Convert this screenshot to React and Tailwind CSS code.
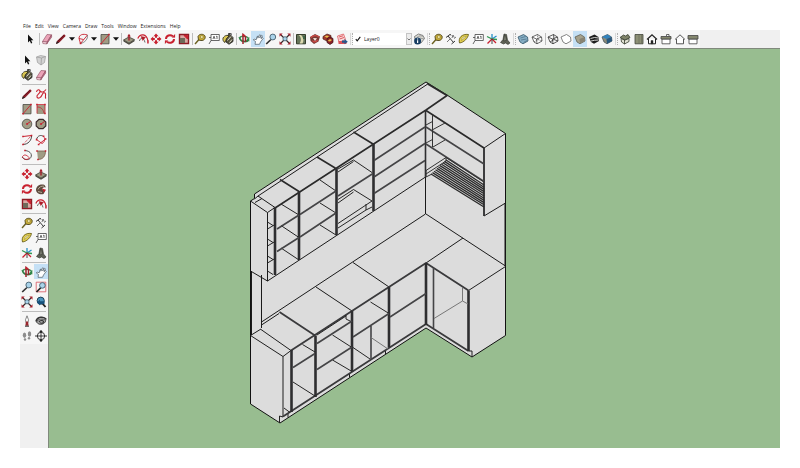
import React from "react";

const RED = "#c8202f";
const TAN = "#a09c85";

/* Every glyph is drawn on a 12 x 12 grid. */
const glyphs = {
  select: <path d="M4 1.500v8l1.800-1.700L7 10.600l1.300-.6L7.100 7.300h2.300z" fill="#111" />,
  eraser: (
    <g stroke="#8a4a5c" strokeWidth=".6">
      <path d="M1.500 8.500 6 1.500l4.500.3L6.300 9z" fill="#eba3b8" />
      <path d="m1.500 8.500 4.800.5-.6 2-3.800-.5z" fill="#f7d3dc" />
      <path d="m6.300 9 4.200-7.200.2 2.200L5.700 11z" fill="#c9708b" />
    </g>
  ),
  pencil: (
    <g>
      <path d="m1 11 1-3 6.500-6.300c1-.9 2.600.5 1.700 1.700L4 9.800z" fill="#8c1d28" />
      <path d="m3 8 6-5.700" stroke="#5a1018" strokeWidth=".8" />
      <path d="m1 11 .9-2.700L4 9.800z" fill="#222" />
    </g>
  ),
  arc: (
    <g fill="none" stroke={RED} strokeWidth=".9">
      <path d="M2 5.500C2 1.500 6 .5 10.500 2L3.500 10.500zM2 5.500 6.500 6.500" />
      <path d="M10.500 2C11 6 8 9.500 3.500 10.500" stroke="#777" />
      <path d="M2.700 9.500h1.700v1.700H2.700z" fill={RED} stroke="none" />
    </g>
  ),
  rect: (
    <g>
      <path d="M2 1.500h8v9.300H2z" fill={TAN} stroke="#4a4a42" strokeWidth=".8" />
      <path d="m2 10.800 8-9.300" stroke={RED} strokeWidth=".9" />
      <path d="M1.300 10h1.500v1.500H1.300zM9.200.7h1.500v1.500H9.200z" fill={RED} />
    </g>
  ),
  rotRect: (
    <g>
      <path d="M2 2h8v9H2z" fill={TAN} />
      <path d="M2 10.500V1.500h8v9M2 4c4 0 6 2 7 6" fill="none" stroke={RED} strokeWidth=".8" />
      <path d="M1.200.8h1.500v1.500H1.200zM9.200.8h1.500v1.500H9.200zM9.200 9.700h1.500v1.500H9.200z" fill={RED} />
    </g>
  ),
  circle: (
    <g>
      <circle cx="6" cy="6" r="4.800" fill={TAN} stroke="#4a4a42" strokeWidth=".8" />
      <path d="m6 6 3.500-2.500" stroke={RED} />
      <circle cx="6" cy="6" r=".9" fill={RED} />
    </g>
  ),
  polygon: (
    <g>
      <path d="m4 1.300 4 0 2.800 2.700v4L8 10.700H4L1.200 8V4z" fill={TAN} stroke="#3a2c2c" strokeWidth="1.200" />
      <path d="m6 6 3.500-2.500" stroke={RED} />
      <circle cx="6" cy="6" r="1" fill={RED} />
    </g>
  ),
  freehand: (
    <path
      d="M1.500 4C2 1 5 1 5 3.500S1 6.500 2 9s4 .5 5-2 3-3 3.500-1-1 3.500.5 4.500M5 3c2 2 4 1 6-1.500"
      fill="none"
      stroke={RED}
      strokeWidth="1.100"
    />
  ),
  arc2: (
    <g fill="none">
      <path d="M2 2.500 10.500 1.500" stroke={RED} />
      <path d="M10.500 1.500C11 6 7 10.500 2 10.500" stroke="#444" />
      <path d="m10.500 1.500-8.500 9" stroke={RED} strokeDasharray="1 1" />
      <path d="M1.200 1.700h1.500v1.500H1.200zM9.800.8h1.500v1.500H9.800zM1.200 9.700h1.500v1.500H1.200z" fill={RED} />
    </g>
  ),
  arc3: (
    <g fill="none">
      <path d="M1.500 5.500C2.500 1.500 6 .5 8.500 2.500" stroke="#444" />
      <path d="M8.500 2.500C10.500 4.500 10 8 7 9.500L1.500 5.500M10.500 5 3.500 10.500" stroke={RED} strokeWidth=".9" />
      <path d="M.8 4.800h1.600v1.600H.8zM2.800 9.700h1.600v1.600H2.800zM9.800 4.200h1.600v1.600H9.800zM7.800 1.500h1.600v1.600H7.800z" fill={RED} />
    </g>
  ),
  arc4: (
    <g fill="none">
      <path d="M4 1.500c6 .5 8 5 5 8-2 1.800-6 1.500-8-1.500" stroke="#555" />
      <path d="M1.500 7.500C4 4.500 6 6.500 8.500 9M1.500 7.500c1 3 4 4 7 1.500" stroke={RED} strokeWidth=".9" />
      <path d="M3.200.8h1.600v1.500H3.200z" fill={RED} />
    </g>
  ),
  pie: (
    <g>
      <path d="M2 2h8.500C10.500 7 8 10.500 3 10.500z" fill={TAN} />
      <path d="M2 2h8.500C10.500 7 8 10.500 3 10.500" fill="none" stroke="#7d5a4c" strokeWidth=".8" />
      <path d="M1.200 1.200h1.500v1.500H1.200zM9.800 1.200h1.500v1.500H9.800zM2.200 9.700h1.500v1.500H2.200z" fill={RED} />
    </g>
  ),
  push: (
    <g>
      <path d="m.5 7 5.300-3 5.700 2.700-5.500 3.500z" fill="#9b9780" stroke="#3b3a30" strokeWidth=".8" />
      <path d="M.5 7v1.500L6 11.700l5.500-3.400V6.700L6 10.200z" fill="#4c4a40" />
      <path d="M6 .8 7.800 3.500H6.700v4H5.300v-4H4.200z" fill="#a51d29" />
    </g>
  ),
  follow: (
    <g>
      <path d="M1 6.500C1.500 2.500 6 .5 9.500 2L11 4.500C8.500 3.500 7 5 7.500 6.500l3 1-2 3.500C4.500 12 1 10 1 6.500z" fill="#5e4a3e" />
      <path d="M3 6.500C4 4 6.500 2.800 9 3.200M3 8.500l4 1" stroke="#b5aa95" fill="none" />
      <path d="m7 5.500 4 1.200L8.800 9.500z" fill={RED} />
    </g>
  ),
  offset: (
    <g fill="none" stroke={RED}>
      <path d="M.8 5.500C3 .5 9.500 0 11 8" strokeWidth="1.200" />
      <path d="M2.500 8C3 4.500 7 4 8 9.500" stroke="#666" />
      <path d="m4 3.500 4.500.8-2.800 3.200z" fill="#a51d29" strokeWidth=".5" />
      <path d="M10.200 7.500h1.500v3h-1.500z" fill={RED} stroke="none" />
    </g>
  ),
  move: (
    <path
      d="M6 .5 8.500 3.200H7v1.600H5V3.200H3.500zM6 11.500 3.500 8.800H5V7.200h2v1.600h1.500zM.5 6 3.200 3.500V5h1.600v2H3.200v1.500zM11.500 6 8.800 8.500V7H7.200V5h1.600V3.500z"
      fill={RED}
    />
  ),
  rotate: (
    <g fill="none" stroke={RED} strokeWidth="2">
      <path d="M2 6c0-3.500 4-5 7-2.700M10 6c0 3.500-4 5-7 2.700" />
      <path d="M8 4.500h3V1.200zM4 7.500H1v3.300z" fill={RED} strokeWidth=".2" />
    </g>
  ),
  scale: (
    <g>
      <path d="M1.500 1.500h9v9h-9z" fill="#d9a8a3" stroke="#8f1b25" strokeWidth="1.400" />
      <path d="M2 5h5v5H2z" fill="#6e6a5a" />
      <path d="M6 2.500h3.500V6z" fill={RED} stroke={RED} />
    </g>
  ),
  tape: (
    <g>
      <path d="M4 3.500C5 .8 9.500.5 11 3c.8 2.500-1 4.800-4 4.500L4.500 7z" fill="#c9ad38" stroke="#4b4218" strokeWidth=".9" />
      <circle cx="7.800" cy="4" r="1.500" fill="#eee3a2" stroke="#766922" strokeWidth=".5" />
      <path d="M5 6.500 1 11" stroke="#6b601f" strokeWidth="1.400" />
    </g>
  ),
  dimension: (
    <g fill="none" stroke="#222" strokeWidth=".9">
      <path d="m1 4.500 4-3M6.500 11 10 8M3 3l5.500 6.500M5 1l1 1.500" />
      <path d="m7 5 1-3 1.200 2.500M9 5.500 11 4M2 9l3-3" stroke="#666" />
    </g>
  ),
  protractor: (
    <g>
      <path d="M1.500 10C0 5 4 .5 10.500 1.500z" fill="#e3cf50" />
      <path d="M1.500 10C0 5 4 .5 10.500 1.500 10 5 6 9.500 1.500 10z" fill="#e3cf50" stroke="#5d5418" strokeWidth=".8" />
      <path d="M3.500 7.500C3.500 5 5.500 3.300 8.500 3.200z" fill="#f6f3dc" stroke="#8d7f25" strokeWidth=".5" />
    </g>
  ),
  text: (
    <g fill="none" stroke="#444" strokeWidth=".8">
      <path d="M3 1.500h8.300v6H3z" fill="#fff" />
      <path d="M3 7.500 1 11M5 6l1-2.800L7 6M8.200 3.500 9 3v3M1 4.500h2" />
    </g>
  ),
  paint: (
    <g>
      <path d="M4 3.500 7.500 1 11 4.500v4L7 11.300 4 9z" fill="#57543f" stroke="#222" strokeWidth=".8" />
      <path d="M1 5c2-3 4-3 6-2L4.500 5.500 3 9.500C1.500 9 .5 7 1 5z" fill="#d9c552" stroke="#2c2a14" strokeWidth=".8" />
      <path d="m5.500 7.500 3.500-4M7.500 9.500 10 6.500" stroke="#e4e2d4" />
      <path d="M6 1c1.500-.8 3-.5 4 .5" stroke="#222" fill="none" />
    </g>
  ),
  orbit: (
    <g fill="none" strokeWidth="1.500">
      <path d="M1.500 4C2 9.500 9 9.500 10.500 6.500" stroke="#2f7d44" strokeWidth="1.800" />
      <path d="M1.300 5C3 2.500 8.500 2.500 10.700 5.500" stroke="#3d8f55" />
      <path d="M5 11V1.500l2.500 2V9" stroke="#9c222b" />
      <path d="M8 7.500 11.300 4v4.500z" fill="#2f8746" stroke="none" />
      <path d="M4 3.200 5.500.6 7.500 3.200z" fill={RED} stroke="none" />
    </g>
  ),
  pan: (
    <path
      d="M3 11.300 3.500 8.500 1.300 7l.9-1 2 .8L5 3.500l1-.3-.2 2L7.500 1.800l1 .3L7.700 5 9.500 2.300l.9.500L9 5.700l1.500-1.200.7.900L8.500 9 7.500 11.300z"
      fill="#fff"
      stroke="#4c5a66"
      strokeWidth=".7"
    />
  ),
  zoom: (
    <g>
      <path d="M6 6.500 1.200 11" stroke="#333" strokeWidth="1.700" />
      <circle cx="7.800" cy="4" r="2.900" fill="#a9d3ea" stroke="#45606f" strokeWidth=".9" />
    </g>
  ),
  zoomWindow: (
    <g>
      <path d="M1.200 1.200h9.600v9.600H1.200z" fill="none" stroke="#d8525c" strokeWidth=".8" />
      <path d="M6 6.500 1.500 11" stroke="#222" strokeWidth="1.700" />
      <circle cx="7.400" cy="4.400" r="2.800" fill="#a9d3ea" stroke="#45606f" strokeWidth=".9" />
    </g>
  ),
  extents: (
    <g>
      <path d="m2 2 8 8M10 2l-8 8" stroke="#3a2a2c" strokeWidth="1.200" />
      <path d="M.5.5h3.200L.5 3.700zM11.500.5v3.200L8.300.5zM.5 11.500V8.300l3.200 3.200zM11.500 11.500H8.300l3.200-3.200z" fill="#a51f2b" />
      <circle cx="6" cy="5.800" r="2.100" fill="#a9d3ea" stroke="#45606f" strokeWidth=".8" />
    </g>
  ),
  previous: (
    <g>
      <path d="m7.500 7.500 3 3.500" stroke="#222" strokeWidth="1.900" />
      <circle cx="5.700" cy="4.700" r="3.600" fill="#4a93bd" stroke="#1e4157" />
      <path d="M2 6.500 5 3.500v1.700h4.500V8H5v1.500z" fill="#17527c" />
    </g>
  ),
  geo: (
    <g>
      <path d="M1.500 1.500h9v9.300h-9z" fill="#66755a" stroke="#353d2b" />
      <path d="M3.500 2c3 2 3 6 1 8.500h3C9.500 7 8 4 6 2z" fill="#dcd9b0" />
      <path d="M8 3h2v3H8z" fill="#3f6548" />
    </g>
  ),
  warehouse: (
    <g>
      <path d="M1 4 6 1l5 2.500-1.500 5L5 11 1.500 8z" fill="#7a3a35" />
      <path d="M2 4.500c2-2.500 6-2.500 8-.5M3.500 7.500c1 2 4 1.500 5-.5" stroke="#cf4a46" strokeWidth="1.300" fill="none" />
      <path d="m4 5 4 .3-2 2.700z" fill="#f2e5dc" />
    </g>
  ),
  extensions: (
    <g>
      <path d="M1 3.500 5 1l4 1.500V6L5 8 1 6z" fill="#a53a2b" stroke="#4b1d19" strokeWidth=".7" />
      <path d="m5 5.500 3-1.500 3 1.500V9.500L8 11.500 5 9.500z" fill="#8c2028" stroke="#35100f" strokeWidth=".7" />
      <path d="m2.500 3.500 2.500-1 2 1-2 1.200zM5.500 8l2.500-2 2 1-2 1.500z" fill="#eac24d" />
    </g>
  ),
  layout: (
    <g>
      <path d="m1.500 3 6-2 2 5.500-6.500 3z" fill="#f9dcdc" stroke="#dd5a60" strokeWidth=".8" />
      <path d="m3 4 4-1.200M3.600 6 8 4.500" stroke="#dd5a60" />
      <path d="M2.500 8h8v3h-8z" fill="#dc5359" />
      <path d="M6 7.500h2.500V6L11.800 8.700 8.500 11.300V9.800H6z" fill="#27568a" />
    </g>
  ),
  layerInfo: (
    <g>
      <path d="M1.500 3.500 5.500 1l4.500 1.500 1.500 3L8 10 2.500 8z" fill="#dcdcd4" stroke="#666" strokeWidth=".8" />
      <path d="M4 4.500c2-2 4.500-2 6.500-1M7 5l4 1" fill="none" stroke="#999" />
      <circle cx="4.600" cy="8" r="3.500" fill="#173d63" />
      <path d="M4.600 5.500v1M4.600 7.200v2.800" stroke="#fff" strokeWidth="1.200" />
    </g>
  ),
  axes: (
    <g fill="none" strokeWidth="1.300">
      <path d="M6 6V1M6 6l4.500-3" stroke="#268fc7" />
      <path d="m6 6-5-2.500M6 6l5 .5" stroke="#2e9752" />
      <path d="m6 6-4.500 4.500M6 6l4 4" stroke={RED} />
      <path d="M6 6v5" stroke="#333" strokeWidth=".9" />
    </g>
  ),
  text3d: (
    <g stroke="#2e3029" strokeWidth=".6">
      <path d="M5 1 7.500 1.500l1 5.500 2.500 3-2 1.500-2.500-1.500L4.500 11 1.500 9.500 4 6.500z" fill="#5e6156" />
      <path d="m5.500 2 1.200.8.5 4.700-2.500.5z" fill="#8f9284" />
    </g>
  ),
  component: (
    <g stroke="#999" strokeWidth=".7">
      <path d="m1.500 3 4-1.500 5 1L9.500 8.500 6 11 2.500 8.500z" fill="#d2d2d2" />
      <path d="m1.500 3 5 1 4-1.500M6.500 4 6 11" fill="none" />
    </g>
  ),
  xray: (
    <g stroke="#34556a" strokeWidth=".8">
      <path d="m1 4 5.500-2.500 4 2.500.5 4-5 2.800L3 9z" fill="#86aec4" />
      <path d="m3.500 5 5-1.500M4 7l5.500-1M6.500 9.500 10 7.500" fill="none" strokeWidth=".5" />
    </g>
  ),
  backEdges: (
    <g stroke="#444" strokeWidth=".8" fill="none">
      <path d="m1 4 5.500-2.500 4 2.500.5 4-5 2.800L3 9z" fill="#fff" />
      <path d="m1 4 4.500 2 5-2M5.500 6l.5 4.800" />
      <path d="m6.500 1.500.5 5-4 2.500M7 6.500 11 8" strokeDasharray="1 .7" />
    </g>
  ),
  wire: (
    <g stroke="#333" strokeWidth=".8" fill="none">
      <path d="m1 4 5.500-2.500 4 2.500.5 4-5 2.800L3 9zM1 4l4.500 2 5-2M5.500 6l.5 4.800M6.500 1.500l.5 5L3 9M7 6.500 11 8" />
    </g>
  ),
  hidden: (
    <g stroke="#666" strokeWidth=".8">
      <path d="m1 4 5.500-2.500 4 2.500.5 4-5 2.800L3 9z" fill="#fff" />
    </g>
  ),
  shaded: (
    <g>
      <path d="m1 4 5.500-2.500 4 2.500.5 4-5 2.800L3 9z" fill="#a6a28d" stroke="#565448" strokeWidth=".7" />
      <path d="m5.500 6 5-2 .5 4-5 2.800z" fill="#878373" />
    </g>
  ),
  textured: (
    <g>
      <path d="m1 4 5.500-2.500 4 2.500.5 4-5 2.800L3 9z" fill="#1e1e1e" />
      <path d="m2.500 5.500 4-1 4 .5M3 8l3.500-.7 4-.3" stroke="#e2e2df" strokeWidth=".9" fill="none" />
    </g>
  ),
  mono: (
    <g>
      <path d="m1 4 5.500-2.500 4 2.500.5 4-5 2.800L3 9z" fill="#8a8a78" stroke="#3a4650" strokeWidth=".7" />
      <path d="m1 4 5.500-2.500 4 2.500-5 2z" fill="#3182bd" />
      <path d="m5.500 6 5-2 .5 4-5 2.800z" fill="#28577d" />
    </g>
  ),
  iso: (
    <g stroke="#333a2c" strokeWidth=".8">
      <path d="m2 5.500 3.500 1.500L10 5.500v3L5.500 11 2.500 9z" fill="#e2e2d4" />
      <path d="M1 4.500 4.500 2l2 1L9 1.500l2 3L6 7z" fill="#7e8268" />
      <path d="M5.500 7v4" />
    </g>
  ),
  top: (
    <g>
      <path d="M2 1.500h8v9.300H2z" fill="#8c8f75" stroke="#41443a" strokeWidth=".8" />
      <path d="M6 2v8.500M8.500 2v8.500" stroke="#6a6d5a" strokeWidth=".7" />
    </g>
  ),
  front: (
    <g fill="none" stroke="#222">
      <path d="M2.500 6v4.800h7V6" fill="#fff" />
      <path d="M1 6.500 6 1.800l5 4.700" strokeWidth="1.200" />
      <path d="M5 7.500h2v3.300H5z" fill="#222" strokeWidth=".4" />
    </g>
  ),
  right: (
    <g stroke="#444" strokeWidth=".8">
      <path d="M2 6h8v4.800H2z" fill="#fff" />
      <path d="M1 3.500h10V6H1z" fill="#85886f" />
      <path d="M6.500 1.500h2.500v2H6.500z" fill="#fff" />
    </g>
  ),
  back: (
    <g fill="none" stroke="#444" strokeWidth=".9">
      <path d="M2.500 6v4.800h7V6" fill="#fff" />
      <path d="M1 6.500 6 1.800l5 4.700" />
    </g>
  ),
  left: (
    <g stroke="#444" strokeWidth=".8">
      <path d="M2 6h8v4.800H2z" fill="#fff" />
      <path d="M1 2.500h10V6H1z" fill="#85886f" />
    </g>
  ),
  camera: (
    <g>
      <path d="m6 .8 1.500 4-.5 3H5l-.5-3z" fill="#fff" stroke="#555" strokeWidth=".7" />
      <path d="M5 6.500h2l.7 4.200H4.300z" fill="#99262c" />
      <path d="M4 11.200h4" stroke="#333" />
    </g>
  ),
  look: (
    <g fill="none" stroke="#333">
      <path d="M1 6.500C2 1.500 9 1 11.300 4.500" strokeWidth="1.600" />
      <path d="M1.500 7C3 3.500 8 3 10.800 5.500 10 9.500 4 11 1.500 7z" fill="#aaa" strokeWidth=".9" />
      <path d="M4 7c1-2 4-2 4.500-.5S6 9 5 7.500" strokeWidth="1.100" />
    </g>
  ),
  walk: (
    <g fill="#8d8d8d">
      <ellipse cx="3.500" cy="5.300" rx="1.700" ry="2.700" />
      <ellipse cx="4" cy="9.500" rx="1.200" ry="1.200" />
      <ellipse cx="8.500" cy="4" rx="1.700" ry="2.700" />
      <ellipse cx="8" cy="8.200" rx="1.200" ry="1.300" />
    </g>
  ),
  section: (
    <g fill="none" stroke="#222" strokeWidth=".9">
      <circle cx="6" cy="6" r="3.700" fill="#fff" />
      <path d="M0 6h12M6 1v10" />
      <path d="M6 0 7.500 2h-3zM6 12l1.500-2h-3z" fill="#222" strokeWidth=".3" />
    </g>
  ),
};

function Tool({ name, active, className = "flex-1" }) {
  return (
    <button
      type="button"
      aria-label={name}
      aria-pressed={active ? true : undefined}
      className={`flex min-w-0 items-center justify-center ${className} ${active ? "bg-[#c5e0f5]" : ""}`}
    >
      <svg viewBox="0 0 12 12" className="size-3 shrink-0" aria-hidden="true">
        {glyphs[name]}
      </svg>
    </button>
  );
}

function Caret({ label }) {
  return (
    <button type="button" aria-label={label} className="flex w-2 items-center justify-center">
      <svg viewBox="0 0 6 4" className="h-1 w-1.5 shrink-0" aria-hidden="true">
        <path d="M0 .3h6L3 3.700z" fill="#111" />
      </svg>
    </button>
  );
}

const Divider = () => (
  <div className="flex w-0.5 shrink-0 justify-center py-0.5">
    <div className="w-px bg-[#bdbdbd]" />
  </div>
);

const Grip = () => (
  <div className="flex w-1 shrink-0 justify-center gap-px py-0.5">
    <div className="w-px bg-[#d8d8d8]" />
    <div className="border-l border-dotted border-[#b0b0b0]" />
  </div>
);

function Group({ names, active, width }) {
  return (
    <div className={`flex shrink-0 ${width}`}>
      {names.map((n) => (
        <Tool key={n} name={n} active={n === active} />
      ))}
    </div>
  );
}

const menus = ["File", "Edit", "View", "Camera", "Draw", "Tools", "Window", "Extensions", "Help"];

const palette = [
  { height: "h-[31px]", tools: ["select", "component", "paint", "eraser"] },
  {
    height: "h-[77px]",
    tools: ["pencil", "freehand", "rect", "rotRect", "circle", "polygon", "arc2", "arc3", "arc4", "pie"],
  },
  { height: "h-[46px]", tools: ["move", "push", "rotate", "follow", "scale", "offset"] },
  { height: "h-[46px]", tools: ["tape", "dimension", "protractor", "text", "axes", "text3d"] },
  { height: "h-[46px]", tools: ["orbit", "pan", "zoom", "zoomWindow", "extents", "previous"] },
  { height: "h-[31px]", tools: ["camera", "look", "walk", "section"] },
];

const rackLines = Array.from({ length: 11 }, (_, i) => {
  const t = i / 10;
  return `M${431 + 15 * t} ${174 - 14 * t}L484 ${207 - 22 * t}`;
}).join("");

function Model() {
  return (
    <svg
      viewBox="49 49 731 399"
      className="block h-full w-full"
      role="img"
      aria-label="Kitchen cabinets, isometric view"
      fill="none"
      strokeLinejoin="round"
    >
      <path
        d="M426 82 447 95 505.500 133.500V335.500L472 357 426 328 280 423 250.500 404V201L254.500 198.500V194z"
        fill="#dcdcdc"
        stroke="#111"
      />
      {/* wall panels and worktop outline */}
      <path
        d="M425.500 177V214L261.500 322M426 214 505.500 266M251.500 271V335M261.500 275V328M250.500 335.500 261 329M261.500 325 279 313.500M353 262.500 389 287M316 287 352 311M426 263 463 238M505 203V266"
        stroke="#1a1a1a"
      />
      {/* upper cabinet tops and fronts */}
      <path
        d="M258 196 427 84.500M254.500 199 258 196 275 207.500M250.500 201 267.500 212.500 275 207.500M255 202.500 262 198.500M267.500 212.500V281M250.500 271 267.500 281 425.500 177M484 148 505.500 133.500M484 216 505.500 203M484 148V216"
        stroke="#1a1a1a"
      />
      <path
        d="M280 179.500 299 191.500M317 157 336 168.500M353.500 132 373 144M427 83.500 447 95.500 426 110 275 208M426 110.500 484 148"
        stroke="#2a2a2a"
        strokeWidth="1.600"
      />
      <path d="M275 207V275M299 191.500V260M336.500 168V235M373.500 144V211" stroke="#2e2e30" strokeWidth="2.600" />
      <path d="M425.500 110V177M484 148V216" stroke="#2e2e30" strokeWidth="1.600" />
      {/* upper shelves */}
      <path
        d="M267.500 222 273 225.500M267.500 229 275 224.500M267.500 239 273 242.500M267.500 246 275 241.500M267.500 256 273 259.500M267.500 263 275 258.500M267.500 271 273 274.500M281 204 299 215M281 225.500 299 237.500M281 248 299 260M320 180 336 191M320 203 336 213M320 225 336 235M338 172 353.500 161.500M338 169 353.500 160 372 172.500M338 199.500 353.500 189.500 372 201M338 203 353.500 192M338 223.500 372 201M338 228 366 210M366 204V210L372 207"
        stroke="#252525"
      />
      <path
        d="M277 229 299 215M277 251.500 299 237.500M300 214.500 336 191M300 237 336 213M338 196 373 173.500M374 160.500 425 127M374 177 425 143.500M374 193.500 425 160.500M426 127 484 164M426 144 484 181.500"
        stroke="#444446"
        strokeWidth="1.600"
      />
      <path
        d="M432.500 115V147M426 125 432.500 121.500M433 129.500 445 123M426 143 432.500 139.500M433 147 445 140M426 170.500 446 157.500V161M426 170V177L432 174M426 174 446 161M446 157.500 484 182"
        stroke="#333"
      />
      <path d={rackLines} stroke="#2a2a2a" strokeWidth="1.300" />
      {/* base cabinets */}
      <path
        d="M250.500 335.500 283 356.500 291 350.500M283 356.500V417M261 329.500 291 350.500M468.500 290.500 505.500 266.500M279.500 423V416L283 417M288 413.500V417.500M349.500 373.500V377.500M385.500 350V354M472 357V351L468.500 351"
        stroke="#1f1f1f"
      />
      <path
        d="M279.500 312 315 335.500M291 350.500 426 263 468.500 290.500M283 416.500 426 324 468.500 351"
        stroke="#3a3a3c"
        strokeWidth="1.800"
      />
      <path
        d="M291.500 350V412M315.500 335.500V397M352 311V371.500M389 287V347.500M426 263V325M468.500 290.500V351"
        stroke="#2e2e30"
        strokeWidth="2.600"
      />
      <path
        d="M302.500 344.500 315 352M293 382 315 396M284 408 290 412.500M332.500 335 352 347.500M332.500 360 352 371.500M346 315V319L352 322M317 335 346 316M370.500 302 389 313.500M353 347.500 370 359"
        stroke="#252525"
      />
      <path
        d="M293 367.500 315 353.500M317 343.500 352 321M317 369.500 352 347M353 337 389 313.500M371 325V360M390 317 426 293.500M433.500 268V328"
        stroke="#444446"
        strokeWidth="1.600"
      />
      <path d="M371 337.500 388 349M434 318.500 462.500 301 468 304M462.500 288V301" stroke="#777" />
    </svg>
  );
}

export default function App() {
  return (
    <div className="flex h-screen flex-col bg-white px-5 pt-[22px] pb-5 font-['Open_Sans','Noto_Sans',sans-serif] text-[5px] leading-[8px] text-[#222]">
      <nav className="flex h-2 shrink-0 gap-1 pl-[3px]" aria-label="Menu">
        {menus.map((m) => (
          <button key={m} type="button" className="whitespace-nowrap">
            {m}
          </button>
        ))}
      </nav>

      <div className="flex h-[18px] shrink-0 bg-[#f0f0f0]" role="toolbar" aria-label="Main tools">
        <div className="flex shrink-0 bg-[#f6f6f6] py-px pl-0.5">
          <Group names={["select"]} width="w-4" />
          <Divider />
          <div className="flex shrink-0">
            <Tool name="eraser" className="w-3.5" />
            <Tool name="pencil" className="w-3.5" />
            <Caret label="Line tools" />
            <Tool name="arc" className="w-3.5" />
            <Caret label="Arc tools" />
            <Tool name="rect" className="w-3.5" />
            <Caret label="Shape tools" />
          </div>
          <Divider />
          <Group names={["push", "offset", "move", "rotate", "scale"]} width="w-[69px]" />
          <Divider />
          <Group names={["tape", "text", "paint"]} width="w-[42px]" />
          <Divider />
          <Group names={["orbit", "pan", "zoom", "extents"]} active="pan" width="w-[55px]" />
          <Divider />
          <Group names={["geo", "warehouse", "extensions", "layout"]} width="w-[55px]" />
          <Grip />
          <label className="my-0.5 flex w-[59px] items-center bg-white pl-0.5">
            <svg viewBox="0 0 6 6" className="size-1.5 shrink-0" aria-hidden="true">
              <path d="m.8 3.200 1.400 1.600L5.300.9" fill="none" stroke="#111" strokeWidth="1.100" />
            </svg>
            <select aria-label="Layer" className="min-w-0 flex-1 appearance-none bg-transparent pl-[3px] outline-none">
              <option>Layer0</option>
            </select>
            <span className="flex h-full w-1.5 items-center justify-center border border-[#c4c4c4] bg-[#ececec]">
              <svg viewBox="0 0 4 3" className="h-[3px] w-1 shrink-0" aria-hidden="true">
                <path d="m.5.500 1.500 1.500L3.500.5" fill="none" stroke="#555" strokeWidth=".8" />
              </svg>
            </span>
          </label>
          <Tool name="layerInfo" className="w-3.5" />
          <Grip />
          <Group names={["tape", "dimension", "protractor", "text", "axes", "text3d"]} width="w-[82px]" />
          <Grip />
          <Group names={["xray", "backEdges"]} width="w-7" />
          <Divider />
          <Group names={["wire", "hidden", "shaded", "textured", "mono"]} active="shaded" width="w-[68px]" />
          <Grip />
          <Group names={["iso", "top", "front", "right", "back", "left"]} width="w-[82px]" />
        </div>
      </div>

      <div className="flex min-h-0 flex-1">
        <aside className="w-7 shrink-0 bg-[#f0f0f0]" aria-label="Tool palette">
          <div className="bg-[#f6f6f6] pt-1">
            {palette.map((g, i) => (
              <React.Fragment key={i}>
                {i > 0 && (
                  <div className="flex h-[3px] items-center px-0.5">
                    <div className="h-px w-full bg-[#bdbdbd]" />
                  </div>
                )}
                <div className={`grid auto-rows-fr grid-cols-2 ${g.height}`}>
                  {g.tools.map((n) => (
                    <Tool key={n} name={n} active={n === "pan"} className="" />
                  ))}
                </div>
              </React.Fragment>
            ))}
          </div>
        </aside>
        <main className="min-w-0 flex-1 border-t border-l border-[#80897c] bg-[#98bd90]">
          <Model />
        </main>
      </div>
    </div>
  );
}
